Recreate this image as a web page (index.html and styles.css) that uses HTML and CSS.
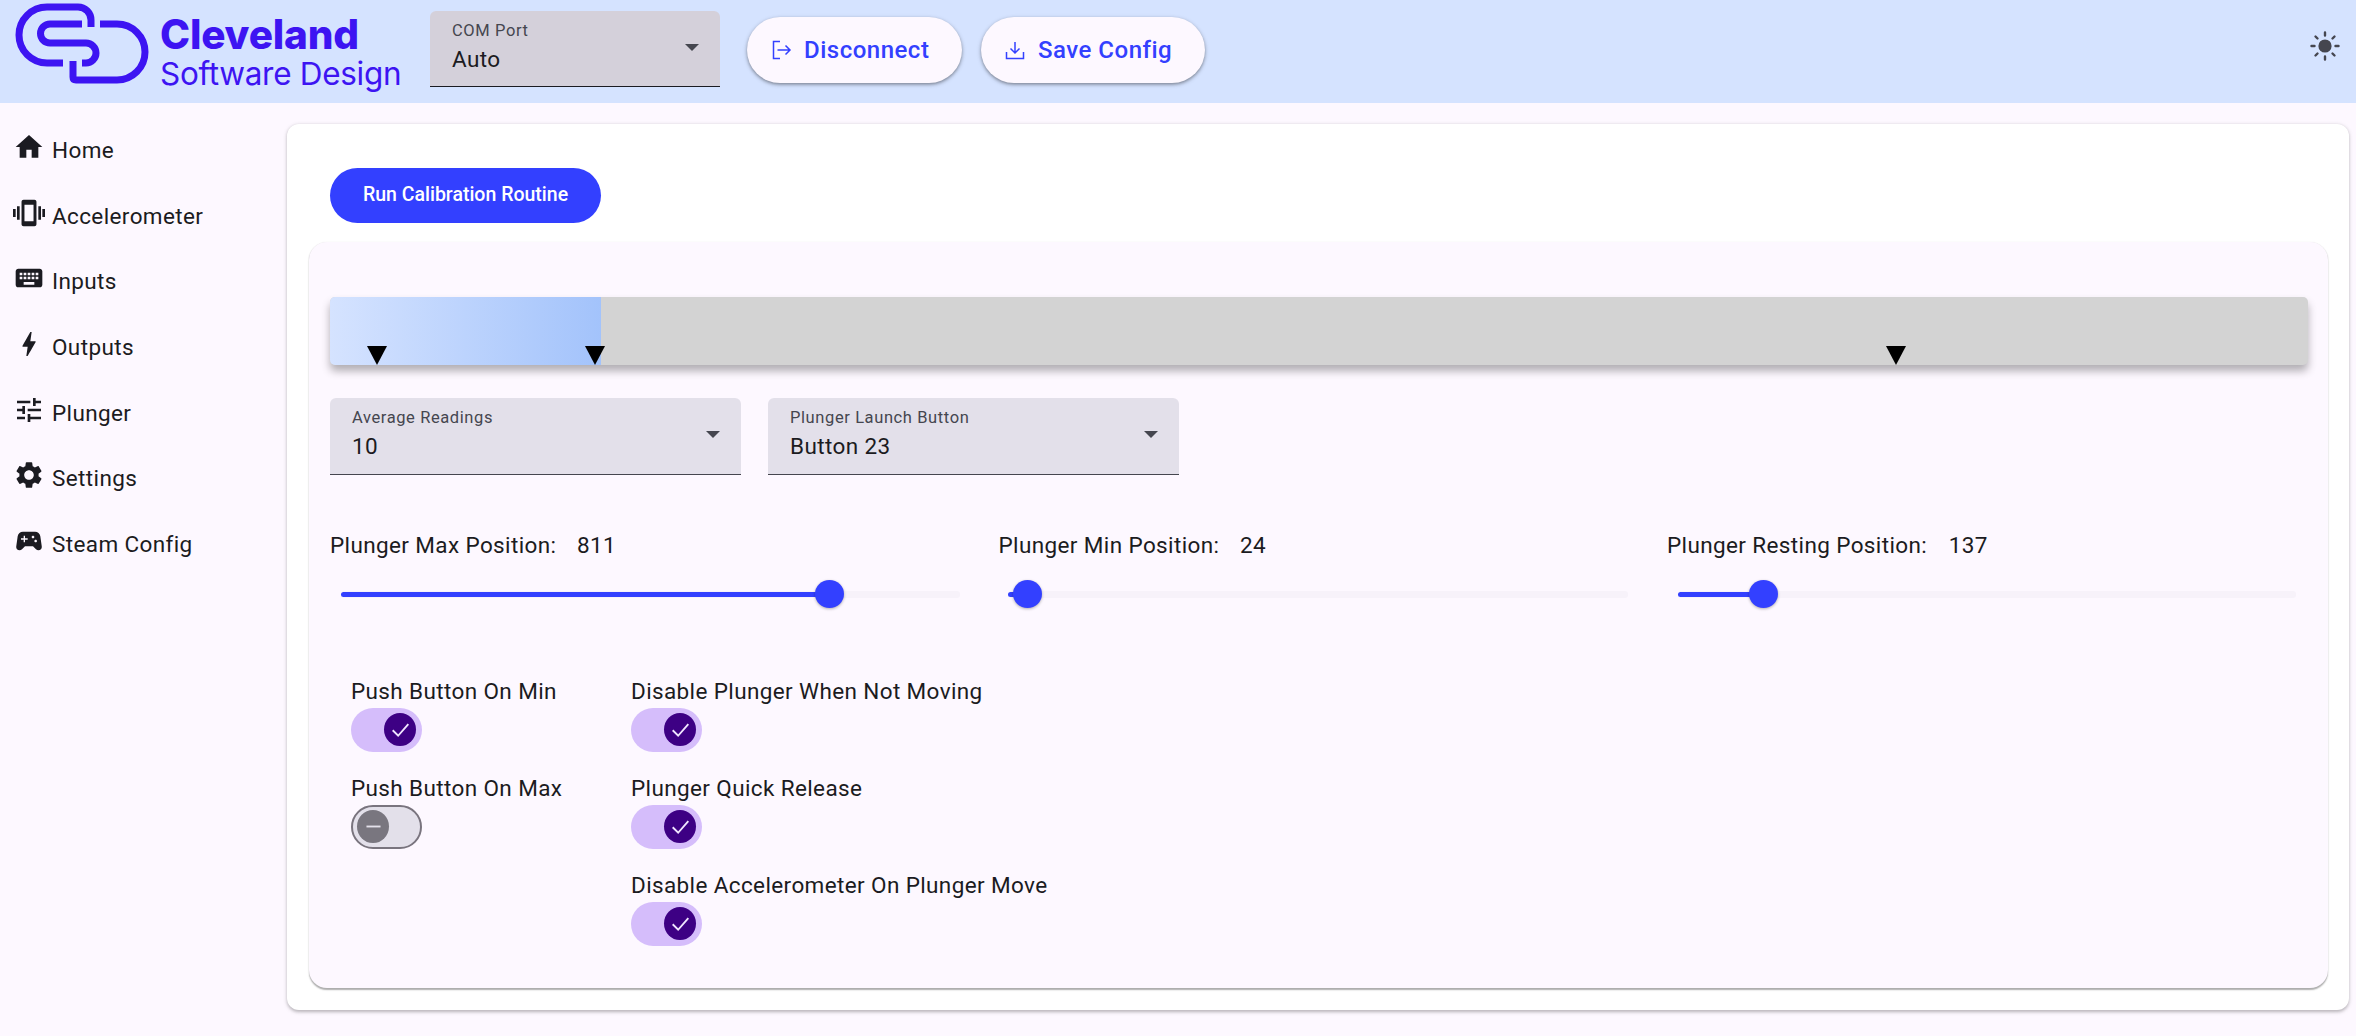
FILE: index.html
```html
<!DOCTYPE html>
<html lang="en">
<head>
<meta charset="utf-8">
<title>Cleveland Software Design</title>
<link rel="stylesheet" href="styles.css">
</head>
<body>
<header class="topbar">
  <div class="brand">
    <svg class="logo" viewBox="0 0 160 90" fill="none" stroke="#3d14f2" stroke-width="7">
      <path d="M63 63H47A28 28 0 0 1 47 7H78A13 13 0 0 1 91 20V27"/>
      <path d="M82 24H50A9.5 9.5 0 0 0 50 43H86A10 10 0 0 1 86 63H82"/>
      <path d="M100 24H117A28 28 0 0 1 117 80H76Q73 80 73 77V61"/>
    </svg>
    <div class="brand-text">
      <div class="brand-name">Cleveland</div>
      <div class="brand-sub">Software Design</div>
    </div>
  </div>
  <div class="field field-com">
    <div class="field-label">COM Port</div>
    <div class="field-value">Auto</div>
    <span class="field-arrow"></span>
  </div>
  <button class="tonal tonal-disconnect">
    <svg class="tonal-icon" viewBox="0 0 24 24" fill="none" stroke="#3340ff" stroke-width="1.5"><path d="M11 3.5H4.5V20.5H11M8.5 12H21M16.5 7.5L21 12L16.5 16.5"/></svg>
    Disconnect
  </button>
  <button class="tonal tonal-save">
    <svg class="tonal-icon" viewBox="0 0 24 24" fill="none" stroke="#3340ff" stroke-width="1.5"><path d="M12 4V15M7.5 10.5L12 15L16.5 10.5M3.5 14V20.5H20.5V14"/></svg>
    Save Config
  </button>
  <svg class="sun" viewBox="0 0 32 32" fill="#45464f" stroke="#45464f" stroke-width="2.4" stroke-linecap="round">
    <circle cx="16" cy="16" r="6.6" stroke="none"/>
    <path d="M16 2.5V5.5M16 26.500V29.500M2.500 16H5.500M26.500 16H29.500M6.500 6.500L8.500 8.500M23.500 23.500L25.500 25.500M6.500 25.500L8.500 23.500M23.500 8.500L25.500 6.500"/>
  </svg>
</header>
<div class="shell">
  <nav class="sidenav">
    <a class="nav-item"><svg class="nav-icon" viewBox="0 0 24 24"><path d="M10 20v-6h4v6h5v-8h3L12 3 2 12h3v8z"/></svg>Home</a>
    <a class="nav-item"><svg class="nav-icon" viewBox="0 0 24 24"><path fill-rule="evenodd" d="M0 15h2V9H0v6zm3 2h2V7H3v10zm19-8v6h2V9h-2zm-3 8h2V7h-2v10zM7.900 2h8.200c.83 0 1.500.67 1.500 1.500v17c0 .83-.67 1.500-1.500 1.500H7.900c-.83 0-1.500-.67-1.500-1.500v-17c0-.83.67-1.500 1.500-1.500zM8.600 5.750v12.500h6.800V5.750z"/></svg>Accelerometer</a>
    <a class="nav-item"><svg class="nav-icon" viewBox="0 0 24 24"><path d="M20 5H4c-1.100 0-1.990.9-1.990 2L2 17c0 1.100.9 2 2 2h16c1.100 0 2-.9 2-2V7c0-1.100-.9-2-2-2zm-9 3h2v2h-2V8zm0 3h2v2h-2v-2zM8 8h2v2H8V8zm0 3h2v2H8v-2zm-1 2H5v-2h2v2zm0-3H5V8h2v2zm9 7H8v-2h8v2zm0-4h-2v-2h2v2zm0-3h-2V8h2v2zm3 3h-2v-2h2v2zm0-3h-2V8h2v2z"/></svg>Inputs</a>
    <a class="nav-item"><svg class="nav-icon" viewBox="0 0 24 24"><path d="M11 21h-1l1-7H7.500c-.58 0-.57-.32-.38-.66.19-.34.05-.08.07-.12C8.480 10.940 10.420 7.540 13 3h1l-1 7h3.500c.49 0 .56.33.47.51l-.07.15C12.960 17.550 11 21 11 21z"/></svg>Outputs</a>
    <a class="nav-item"><svg class="nav-icon" viewBox="0 0 24 24"><path d="M3 17v2h6v-2H3zM3 5v2h10V5H3zm10 16v-2h8v-2h-8v-2h-2v6h2zM7 9v2H3v2h4v2h2V9H7zm14 4v-2H11v2h10zm-6-4h2V7h4V5h-4V3h-2v6z"/></svg>Plunger</a>
    <a class="nav-item"><svg class="nav-icon" viewBox="0 0 24 24"><path d="M19.140 12.940c.04-.3.06-.61.06-.94 0-.32-.02-.64-.07-.94l2.030-1.580c.18-.14.23-.41.12-.61l-1.920-3.320c-.12-.22-.37-.29-.59-.22l-2.390.96c-.5-.38-1.030-.7-1.620-.94l-.36-2.540c-.04-.24-.24-.41-.48-.41h-3.840c-.24 0-.43.17-.47.41l-.36 2.540c-.59.24-1.130.57-1.620.94l-2.390-.96c-.22-.08-.47 0-.59.22L2.740 8.870c-.12.21-.08.47.12.61l2.030 1.580c-.05.3-.09.63-.09.94s.02.64.07.94l-2.030 1.580c-.18.14-.23.41-.12.61l1.920 3.320c.12.22.37.29.59.22l2.390-.96c.5.38 1.030.7 1.620.94l.36 2.54c.05.24.24.41.48.41h3.840c.24 0 .44-.17.47-.41l.36-2.540c.59-.24 1.130-.56 1.620-.94l2.390.96c.22.08.47 0 .59-.22l1.920-3.320c.12-.22.07-.47-.12-.61l-2.010-1.580zM12 15.600c-1.980 0-3.600-1.620-3.600-3.600s1.620-3.600 3.600-3.600 3.600 1.620 3.600 3.600-1.620 3.600-3.600 3.600z"/></svg>Settings</a>
    <a class="nav-item"><svg class="nav-icon" viewBox="0 0 24 24"><path d="M21.580 16.090l-1.090-7.660C20.210 6.460 18.520 5 16.530 5H7.470C5.480 5 3.790 6.460 3.510 8.430l-1.090 7.660C2.200 17.630 3.390 19 4.940 19c.68 0 1.320-.27 1.800-.75L9 16h6l2.250 2.250c.48.48 1.130.75 1.800.75 1.560 0 2.750-1.370 2.530-2.910zM11 11H9v2H8v-2H6v-1h2V8h1v2h2v1zm4-1c-.55 0-1-.45-1-1s.45-1 1-1 1 .45 1 1-.45 1-1 1zm2 3c-.55 0-1-.45-1-1s.45-1 1-1 1 .45 1 1-.45 1-1 1z"/></svg>Steam Config</a>
  </nav>
  <main class="card">
    <button class="run-btn">Run Calibration Routine</button>
    <section class="panel">
      <div class="meter">
        <div class="meter-fill"></div>
        <span class="marker marker-a"></span>
        <span class="marker marker-b"></span>
        <span class="marker marker-c"></span>
      </div>
      <div class="selects">
        <div class="field field-panel">
          <div class="field-label">Average Readings</div>
          <div class="field-value">10</div>
          <span class="field-arrow"></span>
        </div>
        <div class="field field-panel">
          <div class="field-label">Plunger Launch Button</div>
          <div class="field-value">Button 23</div>
          <span class="field-arrow"></span>
        </div>
      </div>
      <div class="sliders">
        <div class="slider-col">
          <div class="slider-label"><span>Plunger Max Position:</span><span>811</span></div>
          <div class="slider"><div class="slider-active" style="width:78.9%"></div><span class="slider-thumb" style="left:78.9%"></span></div>
        </div>
        <div class="slider-col">
          <div class="slider-label"><span>Plunger Min Position:</span><span>24</span></div>
          <div class="slider"><div class="slider-active" style="width:3.1%"></div><span class="slider-thumb" style="left:3.1%"></span></div>
        </div>
        <div class="slider-col">
          <div class="slider-label"><span>Plunger Resting Position:</span><span>137</span></div>
          <div class="slider"><div class="slider-active" style="width:13.7%"></div><span class="slider-thumb" style="left:13.7%"></span></div>
        </div>
      </div>
      <div class="toggles">
        <div class="toggle-col toggle-col-a">
          <div class="toggle-row"><div class="toggle-label">Push Button On Min</div>
            <div class="switch on"><span class="knob"><svg viewBox="0 0 16 16"><path d="M3 8.500L6.500 12L13 4.500"/></svg></span></div></div>
          <div class="toggle-row"><div class="toggle-label">Push Button On Max</div>
            <div class="switch off"><span class="knob"><svg viewBox="0 0 16 16"><path d="M3.500 8H12.500"/></svg></span></div></div>
        </div>
        <div class="toggle-col">
          <div class="toggle-row"><div class="toggle-label">Disable Plunger When Not Moving</div>
            <div class="switch on"><span class="knob"><svg viewBox="0 0 16 16"><path d="M3 8.500L6.500 12L13 4.500"/></svg></span></div></div>
          <div class="toggle-row"><div class="toggle-label">Plunger Quick Release</div>
            <div class="switch on"><span class="knob"><svg viewBox="0 0 16 16"><path d="M3 8.500L6.500 12L13 4.500"/></svg></span></div></div>
          <div class="toggle-row"><div class="toggle-label">Disable Accelerometer On Plunger Move</div>
            <div class="switch on"><span class="knob"><svg viewBox="0 0 16 16"><path d="M3 8.500L6.500 12L13 4.500"/></svg></span></div></div>
        </div>
      </div>
    </section>
  </main>
</div>
</body>
</html>
```
FILE: styles.css
```css
* { box-sizing: border-box; }
html, body { margin: 0; height: 100%; overflow: hidden; }
body {
  width: 2356px;
  height: 1036px;
  background: #fdf8ff;
  color: #1b1b21;
  font-family: Roboto, "Liberation Sans", sans-serif;
  font-size: 22.5px;
  letter-spacing: 0.38px;
}

/* top bar */
.topbar {
  height: 103px;
  background: #d5e3ff;
  display: flex;
  align-items: flex-start;
  padding-right: 15px;
}
.brand { display: flex; width: 430px; height: 90px; flex: none; }
.logo { width: 160px; height: 90px; flex: none; }
.brand-text { color: #3d14f2; font-family: Inter, sans-serif; letter-spacing: 0; }
.brand-name { font-size: 40.5px; font-weight: 800; line-height: 39px; margin-top: 15px; letter-spacing: -0.2px; }
.brand-sub { font-size: 31.5px; font-weight: 400; line-height: 39px; letter-spacing: -0.3px; }

.field {
  position: relative;
  background: #e3e0ea;
  border-bottom: 1.500px solid #45464f;
  border-radius: 6px 6px 0 0;
  padding: 8px 22px 0;
  height: 77px;
  width: 411px;
  flex: none;
}
.field-com {
  margin-top: 11px;
  width: 290px;
  height: 76px;
  background: #d4d0da;
  border-bottom-color: #1b1b21;
}
.field-label { font-size: 16.500px; line-height: 24px; color: #45464f; letter-spacing: 0.6px; }
.field-value { font-size: 22.5px; line-height: 32px; letter-spacing: 0.4px; margin-top: 0; }
.field-arrow {
  position: absolute;
  right: 21px;
  top: 33px;
  width: 0;
  height: 0;
  border-left: 7.500px solid transparent;
  border-right: 7.500px solid transparent;
  border-top: 7.500px solid #45464f;
}

.tonal {
  height: 66px;
  margin-top: 17px;
  border: 0;
  border-radius: 33px;
  background: #fdf8ff;
  color: #3340ff;
  font: 500 24px Roboto, sans-serif;
  letter-spacing: 0.5px;
  display: flex;
  align-items: center;
  flex: none;
  padding: 0;
  box-shadow: 0 1.500px 3px rgba(0,0,0,.3), 0 1.500px 4px 1px rgba(0,0,0,.12);
}
.tonal-disconnect { width: 215px; margin-left: 27px; padding-left: 22px; }
.tonal-save { width: 224px; margin-left: 19px; padding-left: 22px; }
.tonal-icon { width: 24px; height: 24px; margin-right: 11px; flex: none; }
.sun { width: 32px; height: 32px; margin: 30px 0 0 auto; flex: none; }

/* shell */
.shell { display: flex; height: 933px; }
.sidenav { width: 287px; flex: none; padding-top: 14px; }
.nav-item { display: flex; align-items: center; height: 65.700px; padding-left: 13px; }
.nav-icon { width: 32px; height: 32px; margin-right: 7px; fill: #1b1b21; flex: none; position: relative; top: -3px; }

.card {
  width: 2062px;
  height: 886px;
  margin-top: 21px;
  background: #fff;
  border-radius: 12px;
  box-shadow: 0 1.500px 3px rgba(0,0,0,.2), 0 1.500px 4px 1px rgba(0,0,0,.07);
  padding: 44px 21px 0 22px;
}
.run-btn {
  display: block;
  width: 271px;
  height: 55px;
  margin-left: 21px;
  border: 0;
  border-radius: 28px;
  background: #3340ff;
  color: #fff;
  font: 500 19.5px Roboto, sans-serif;
  letter-spacing: 0;
  padding: 0 0 2px;
}
.panel {
  margin-top: 19px;
  height: 746px;
  background: #fdf8ff;
  border-radius: 18px;
  box-shadow: 0 1.500px 1.500px rgba(0,0,0,.32), 0 0 1px rgba(0,0,0,.06);
  padding: 55px 20px 0 21px;
}

.meter {
  position: relative;
  height: 68px;
  background: #d3d3d3;
  border-radius: 5px;
  box-shadow: 0 6px 9px rgba(0,0,0,.3);
}
.meter-fill {
  width: 271px;
  height: 100%;
  border-radius: 5px 0 0 5px;
  background: linear-gradient(90deg, #d5e3ff, #a3c3fb);
}
.marker {
  position: absolute;
  bottom: 0;
  width: 0;
  height: 0;
  border-left: 10px solid transparent;
  border-right: 10px solid transparent;
  border-top: 19px solid #000;
}
.marker-a { left: 37px; }
.marker-b { left: 255px; }
.marker-c { left: 1556px; }

.selects { display: flex; gap: 27px; margin-top: 33px; }

.sliders { display: flex; margin-top: 54px; }
.slider-col { width: 668.5px; flex: none; }
.slider-col:last-child { width: 640px; }
.slider-label { display: flex; gap: 20.5px; line-height: 32px; }
.slider-col:last-child .slider-label { gap: 21.5px; }
.slider { position: relative; width: 619px; height: 7px; margin: 30px 0 0 11px; background: #f7f2fa; border-radius: 3px; }
.slider-col:nth-child(2) .slider { margin-left: 9.5px; width: 620px; }
.slider-col:nth-child(3) .slider { margin-left: 11px; width: 618px; }
.slider-active { height: 5px; background: #3340ff; border-radius: 3px; position: relative; top: 1px; }
.slider-thumb {
  position: absolute;
  top: -11px;
  width: 29px;
  height: 28px;
  margin-left: -14px;
  border-radius: 50%;
  background: #3340ff;
  box-shadow: 0 1px 3px rgba(0,0,0,.3);
}

.toggles { display: flex; margin-top: 77px; padding-left: 21px; }
.toggle-col-a { width: 280px; flex: none; }
.toggle-row { height: 97px; }
.toggle-label { line-height: 32px; }
.switch {
  position: relative;
  width: 71px;
  height: 44px;
  border-radius: 22px;
  margin-top: 1px;
}
.switch.on { background: #d5bdfb; }
.switch.off { background: #e3e0ea; border: 2.500px solid #79747e; }
.knob {
  position: absolute;
  width: 32px;
  height: 33px;
  border-radius: 50%;
  display: flex;
  align-items: center;
  justify-content: center;
}
.on .knob { right: 6px; top: 5px; background: #3d0084; }
.off .knob { left: 4px; top: 3px; background: #79767f; }
.knob svg { width: 25px; height: 25px; fill: none; stroke-width: 1.200px; }
.on .knob svg { stroke: #f1e6ff; }
.off .knob svg { stroke: #e3e0ea; }
```
